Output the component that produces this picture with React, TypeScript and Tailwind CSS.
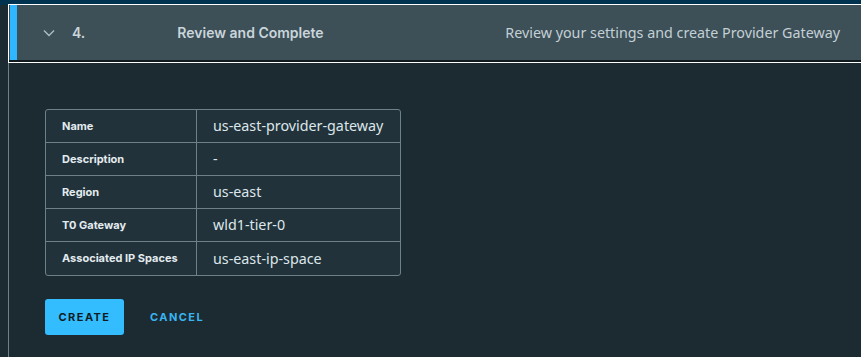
import React from 'react';

type Row = { label: string; value: string };

const rows: Row[] = [
  { label: 'Name', value: 'us-east-provider-gateway' },
  { label: 'Description', value: '-' },
  { label: 'Region', value: 'us-east' },
  { label: 'T0 Gateway', value: 'wld1-tier-0' },
  { label: 'Associated IP Spaces', value: 'us-east-ip-space' },
];

const heading = { fontFamily: 'Inter, "Noto Sans", sans-serif' };
const body = { fontFamily: '"Noto Sans", "Open Sans", sans-serif' };

export default function App() {
  return (
    <div className="w-[861px] h-[357px] bg-[#1c2a31] overflow-hidden flex flex-col">
      {/* top strip from the previous step */}
      <div className="h-[5px] bg-[#00334f] shrink-0" />

      <div className="flex flex-1 min-h-0">
        <div className="w-[8px] shrink-0" />
        <div className="flex-1 flex flex-col border-l border-[#6f8088]">
          {/* step header */}
          <div className="h-[57px] shrink-0 flex items-stretch bg-[#3d4f57] border-b-2 border-[#111a1f] outline outline-1 outline-white">
            <div className="w-[7px] ml-[1px] bg-[#2eb6ff]" />
            <div className="flex items-center flex-1 pl-[26px] pr-[21px]">
              <svg width="12" height="8" viewBox="0 0 12 8" className="text-[#aebdc4]">
                <path d="M1 1.5 L6 6.5 L11 1.5" fill="none" stroke="currentColor" strokeWidth="1.4" />
              </svg>
              <span style={heading} className="ml-[17px] text-[14px] font-semibold text-[#c9d5db]">4.</span>
              <span style={heading} className="ml-[92px] text-[14px] font-semibold text-[#c9d5db]">
                Review and Complete
              </span>
              <span style={body} className="ml-auto text-[14.3px] text-[#c3d0d6]">
                Review your settings and create Provider Gateway
              </span>
            </div>
          </div>

          {/* summary */}
          <div className="pl-[36px] pt-[47px]">
            <div className="w-[356px] border border-[#6f8088] rounded-[3px] bg-[#21323a] overflow-hidden">
              {rows.map((r, i) => (
                <div
                  key={r.label}
                  className={`flex h-[33px] ${i < rows.length - 1 ? 'border-b border-[#6f8088]' : ''}`}
                >
                  <div
                    style={heading}
                    className="w-[151px] shrink-0 border-r border-[#6f8088] flex items-center pl-[16px] text-[11px] font-bold text-[#e3ebef]"
                  >
                    {r.label}
                  </div>
                  <div style={body} className="flex items-center pl-[16px] text-[14.3px] text-[#dde6ea]">
                    {r.value}
                  </div>
                </div>
              ))}
            </div>

            <div className="flex items-center mt-[23px]">
              <button
                style={heading}
                className="h-[36px] w-[79px] rounded-[3px] bg-[#33bdff] text-[#0f1c24] text-[11px] font-bold tracking-[0.13em]"
              >
                CREATE
              </button>
              <button
                style={heading}
                className="ml-[26px] text-[11px] font-bold tracking-[0.13em] text-[#3ab4f0]"
              >
                CANCEL
              </button>
            </div>
          </div>
        </div>
      </div>
    </div>
  );
}
